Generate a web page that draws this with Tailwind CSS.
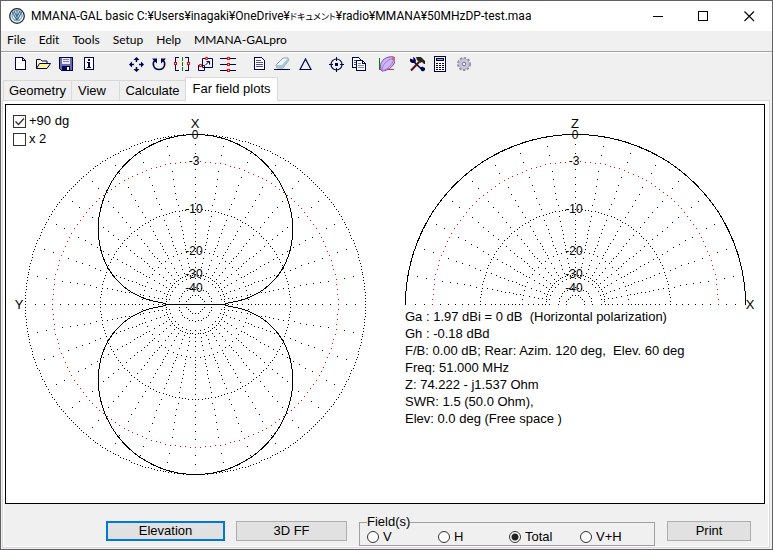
<!DOCTYPE html>
<html lang="en">
<head>
  <meta charset="UTF-8">
  <meta name="viewport" content="width=device-width, initial-scale=1.0">
  <title>MMANA-GAL basic</title>
  <script src="https://cdn.jsdelivr.net/npm/@tailwindcss/browser@4"></script>
</head>
<body class="h-screen flex flex-col overflow-hidden border border-[#626062] bg-[#f0f0f0] text-black text-[13px] font-['Liberation_Sans',Arial,sans-serif]">

<!-- Title bar -->
<header class="flex h-[30px] shrink-0 items-center bg-white font-['Roboto','Noto_Sans_CJK_JP',sans-serif] text-[12px]">
  <svg class="ml-2 h-4 w-4 shrink-0" viewBox="0 0 16 16" fill="none">
    <circle cx="8" cy="8" r="7.3" fill="#e3f1f8" stroke="#1c2430" stroke-width="1.2"/>
    <circle cx="8" cy="7.5" r="5" stroke="#5f8eaa" stroke-width="1"/>
    <path d="M3 3.5l5 9 5-9M5 3l3 6 3-6M8 3v10" stroke="#3f6d8c" stroke-width="1.1"/>
    <path d="M5 12.5h6" stroke="#7fa8bd"/>
  </svg>
  <h1 class="ml-1.5 flex-1 whitespace-nowrap leading-4">MMANA-GAL basic C:¥Users¥inagaki¥OneDrive¥<span class="text-[9px] [font-feature-settings:'palt']">ドキュメント</span>¥radio¥MMANA¥50MHzDP-test.maa</h1>
  <div class="flex">
    <button type="button" aria-label="Minimize" class="flex h-[28px] w-[45px] items-center justify-center"><svg class="h-[11px] w-[11px]" viewBox="0 0 11 11" shape-rendering="crispEdges"><path d="M0 5.5h10" stroke="#000"/></svg></button>
    <button type="button" aria-label="Maximize" class="flex h-[28px] w-[45px] items-center justify-center"><svg class="h-[11px] w-[11px]" viewBox="0 0 11 11" shape-rendering="crispEdges"><path d="M.5.5h9v9h-9z" stroke="#000" fill="none"/></svg></button>
    <button type="button" aria-label="Close" class="flex h-[28px] w-[46px] items-center justify-center"><svg class="h-[11px] w-[11px]" viewBox="0 0 11 11"><path d="M.5.5l9.500 9.500M10 .5L.5 10" stroke="#000" stroke-width="1.1"/></svg></button>
  </div>
</header>

<!-- Menu bar -->
<nav class="flex h-[21px] shrink-0 items-center gap-[13px] border-b border-[#a0a0a0] px-1.5 pb-0.5 font-['Lato',sans-serif] text-[12px] leading-4">
  <a href="#">File</a>
  <a href="#">Edit</a>
  <a href="#">Tools</a>
  <a href="#">Setup</a>
  <a href="#">Help</a>
  <a href="#">MMANA-GALpro</a>
</nav>

<!-- Tool bar -->
<div class="flex h-[25px] shrink-0 items-center border-t border-white pb-0.5 pl-[7px]">
  <div class="flex">
    <button type="button" aria-label="New" class="flex w-[23px] justify-center"><svg class="h-4 w-4" viewBox="0 0 16 16" shape-rendering="crispEdges"><path d="M3.500 1.500h7l3 3v9h-10z" fill="#fff" stroke="#000052"/><path d="M10.500 1.500v3h3" fill="none" stroke="#000052"/></svg></button>
    <button type="button" aria-label="Open" class="flex w-[23px] justify-center"><svg class="h-4 w-4" viewBox="0 0 16 16"><path d="M1.500 12.500V3.500h4l1.500 1.500h5v3" fill="#fdf9c0" stroke="#000052"/><path d="M1.500 12.500l3-5h11l-3.500 5z" fill="#fdf6a0" stroke="#000052"/></svg></button>
    <button type="button" aria-label="Save" class="flex w-[23px] justify-center"><svg class="h-4 w-4" viewBox="0 0 16 16" shape-rendering="crispEdges"><path d="M1.500 1.500h13v13h-11l-2-2z" fill="#6b6baa" stroke="#000052"/><path d="M4 2h8v6H4z" fill="#e8e8f8"/><path d="M5 3.500h6M5 5.500h6" stroke="#8080b0"/><path d="M4 10h8v5H4z" fill="#000052"/><path d="M9 11h2v3H9z" fill="#fff"/></svg></button>
    <button type="button" aria-label="Info" class="flex w-[23px] justify-center"><svg class="h-4 w-4" viewBox="0 0 16 16" shape-rendering="crispEdges"><path d="M3.500 1.500h9v12h-9z" fill="#fff" stroke="#000052"/><path d="M7 3h2v2H7zM6 6h3v5h1v1H6v-1h1V7H6z" fill="#000052"/></svg></button>
  </div>
  <div class="ml-6 flex">
    <button type="button" aria-label="Move" class="flex w-[23px] justify-center"><svg class="h-4 w-4" viewBox="0 0 16 16"><path d="M8.500 3v3M8.500 11v3M3 8.500h3M11 8.500h3" stroke="#000052" stroke-width="1.500"/><path d="M8.500 1l3 3h-6zM8.500 16l3-3h-6zM1 8.500l3-3v6zM16 8.500l-3-3v6z" fill="#000052"/></svg></button>
    <button type="button" aria-label="Rotate" class="flex w-[23px] justify-center"><svg class="h-4 w-4" viewBox="0 0 16 16"><path d="M4 4C1 7 2 13.500 8 13.500S15 7 12 4" fill="none" stroke="#000052" stroke-width="1.600"/><path d="M1 2.500h5v5zM15 2.500h-5v5z" fill="#000052"/></svg></button>
    <button type="button" aria-label="Mirror" class="flex w-[23px] justify-center"><svg class="h-4 w-4" viewBox="0 0 16 16" shape-rendering="crispEdges"><path d="M5 1.500H1.500v13H5M11 1.500h3.500v13H11" fill="none" stroke="#000052"/><path d="M8 1v14" stroke="#008000" stroke-dasharray="4 1"/><path d="M.5 6.500h2v2h-2zM13.500 6.500h2v2h-2z" fill="#fff" stroke="#f00"/></svg></button>
    <button type="button" aria-label="Scale" class="flex w-[23px] justify-center"><svg class="h-4 w-4" viewBox="0 0 16 16"><path d="M5.500 2.500h10v9h-10zM1.500 9.500h6v5h-6z" fill="none" stroke="#000052"/><path d="M8.500 9l4-4M9.500 5.500h3V8.500" fill="none" stroke="#000052"/><path d="M8.500 1.500h2v2h-2zM2.500 8.500h2v2h-2z" fill="#fff" stroke="#f00"/></svg></button>
    <button type="button" aria-label="Align" class="flex w-[23px] justify-center"><svg class="h-4 w-4" viewBox="0 0 16 16" shape-rendering="crispEdges"><path d="M0 2.500h16M0 8.500h16M0 14.500h16" stroke="#000052"/><path d="M7.500 1.500h2v2h-2zM7.500 7.500h2v2h-2zM7.500 13.500h2v2h-2z" fill="#fff" stroke="#f00"/></svg></button>
  </div>
  <div class="ml-2 flex">
    <button type="button" aria-label="Text" class="flex w-[23px] justify-center"><svg class="h-4 w-4" viewBox="0 0 16 16" shape-rendering="crispEdges"><path d="M3.500 1.500h7l3 3v9h-10z" fill="#fff" stroke="#000052"/><path d="M5 4.500h5M5 6.500h7M5 8.500h7M5 10.500h7" stroke="#50508c"/></svg></button>
    <button type="button" aria-label="Erase" class="flex w-[23px] justify-center"><svg class="h-4 w-4" viewBox="0 0 16 16"><path d="M0 13.500h16" stroke="#000052"/><path d="M2 9l7-7h5l1 2-6 8H3z" fill="#eef6f8" stroke="#6c8fa0" stroke-width=".8"/><path d="M2 9h6l1 3H3zM8 9l6-7 1 2-6 8z" fill="#a9c6d2"/></svg></button>
    <button type="button" aria-label="Triangle" class="flex w-[23px] justify-center"><svg class="h-4 w-4" viewBox="0 0 16 16"><path d="M8.500 3L14 13.500H3z" fill="none" stroke="#000052" stroke-width="1.200"/></svg></button>
  </div>
  <div class="ml-2 flex">
    <button type="button" aria-label="Center" class="flex w-[23px] justify-center"><svg class="h-4 w-4" viewBox="0 0 16 16"><circle cx="8.500" cy="8.500" r="5.500" fill="none" stroke="#000052" stroke-width="1.200"/><path d="M8.500 1v4M8.500 12v4M1 8.500h4M12 8.500h4" stroke="#000052"/><path d="M7 7h3v3H7z" fill="#000052"/></svg></button>
    <button type="button" aria-label="Copy" class="flex w-[23px] justify-center"><svg class="h-4 w-4" viewBox="0 0 16 16" shape-rendering="crispEdges"><path d="M1.500 1.500h6l2 2v8h-8z" fill="#fff" stroke="#000052"/><path d="M3 4.500h4M3 6.500h3M3 8.500h3" stroke="#50508c"/><path d="M5.500 4.500h6l3 3v7h-9z" fill="#fff" stroke="#000052"/><path d="M11.500 4.500v3h3" fill="none" stroke="#000052"/><path d="M7 7.500h3M7 9.500h6M7 11.500h6" stroke="#8080b0"/></svg></button>
  </div>
  <div class="ml-[5px] flex">
    <button type="button" aria-label="3D pattern" class="flex w-[23px] justify-center"><svg class="h-4 w-4" viewBox="0 0 16 16"><path d="M.5 2v11" stroke="#008000"/><path d="M0 13.500h15" stroke="#e03030"/><path d="M3 15C-1 10 3 2 10 1c3-.5 6-.5 6 2 1 5-6 12-13 12z" fill="#cdb6f2" stroke="#7a4ab8"/><path d="M3 15C3 9 7 4 15 2M3 15c6-2 10-6 12-12" fill="none" stroke="#9f78d8"/><path d="M13 1h3v3h-3z" fill="#e86060"/></svg></button>
  </div>
  <div class="ml-[7px] flex">
    <button type="button" aria-label="Tools" class="flex w-[23px] justify-center"><svg class="h-4 w-4" viewBox="0 0 16 16"><path d="M3 4l11 10.500" stroke="#000052" stroke-width="1.600"/><path d="M10 6l-8 8.500" stroke="#521010" stroke-width="2"/><path d="M1 2.500v3l2 1.500h3l1-2-1-3-2-1 .5 3zM11.500 12l1.500-1.500 3 1.500v2l-2 1.500-2-1z" fill="#000052"/><path d="M7 1h5l4 4v3h-1l-2-2-2 1-3-3z" fill="#28281a"/></svg></button>
    <button type="button" aria-label="Calculator" class="flex w-[24px] justify-center"><svg class="h-4 w-4" viewBox="0 0 16 16" shape-rendering="crispEdges"><path d="M2.500.5h11v15h-11z" fill="#fff" stroke="#000052"/><path d="M4 2h8v3H4z" fill="#000052"/><path d="M5 3h6v1H5z" fill="#8ab"/><path d="M4 7h2v1H4zM7 7h2v1H7zM10 7h2v1h-2zM4 9h2v1H4zM7 9h2v1H7zM10 9h2v1h-2zM4 11h2v1H4zM7 11h2v1H7zM10 11h2v1h-2zM4 13h2v1H4zM7 13h2v1H7zM10 13h2v1h-2z" fill="#000052"/></svg></button>
    <button type="button" aria-label="Options" class="flex w-[23px] justify-center"><svg class="h-4 w-4" viewBox="0 0 16 16"><circle cx="8" cy="8" r="6" fill="none" stroke="#8c8ca8" stroke-width="2" stroke-dasharray="2.400 1.500"/><circle cx="8" cy="8" r="5.300" fill="#c8c8d8" stroke="#a2a2bc" stroke-width=".7"/><circle cx="8" cy="8" r="1.800" fill="#f0f0f0" stroke="#77778e"/></svg></button>
  </div>
</div>

<!-- Tabs -->
<div role="tablist" class="relative z-10 -mb-px flex h-[24px] shrink-0 items-end pl-0.5 leading-4">
  <button type="button" role="tab" class="h-[21px] w-[69px] border border-[#d9d9d9]">Geometry</button>
  <button type="button" role="tab" class="-ml-px h-[21px] w-[49px] border border-[#d9d9d9] pl-[6px] text-left">View</button>
  <button type="button" role="tab" class="-ml-px h-[21px] w-[67px] border border-[#d9d9d9]">Calculate</button>
  <button type="button" role="tab" aria-selected="true" class="-ml-px h-[24px] w-[93px] border border-b-0 border-[#d9d9d9] bg-white pb-0.5">Far field plots</button>
</div>

<main class="mr-0.5 mb-px ml-px flex min-h-0 flex-1 flex-col border border-[#d9d9d9] bg-white px-px pt-[3px] pb-px">
  <!-- Plots -->
  <section class="relative mr-[3px] ml-px flex min-h-0 flex-1 border border-black">
    <svg id="azimuth" class="h-[398px] w-[380px] shrink-0" viewBox="0 0 380 398" shape-rendering="crispEdges"></svg>
    <div class="flex-1">
      <svg id="elevation" class="h-[203px] w-[378px]" viewBox="0 0 378 203" shape-rendering="crispEdges" overflow="visible"></svg>
      <div class="ml-[19px] whitespace-pre leading-[17px]"><p>Ga : 1.97 dBi = 0 dB  (Horizontal polarization)</p><p>Gh : -0.18 dBd</p><p>F/B: 0.00 dB; Rear: Azim. 120 deg,  Elev. 60 deg</p><p>Freq: 51.000 MHz</p><p>Z: 74.222 - j1.537 Ohm</p><p>SWR: 1.5 (50.0 Ohm),</p><p>Elev: 0.0 deg (Free space )</p></div>
    </div>
    <div class="absolute top-[7px] left-[7px] leading-[18px]">
      <label class="relative flex items-center gap-[3px]"><input type="checkbox" checked class="peer h-[13px] w-[13px] appearance-none border border-[#333] bg-white"><svg class="absolute left-px hidden h-[11px] w-[11px] peer-checked:block" viewBox="0 0 11 11"><path d="M1.500 5.500l3 3 5.500-6" fill="none" stroke="#333" stroke-width="1.300"/></svg>+90 dg</label>
      <label class="flex items-center gap-[3px]"><input type="checkbox" class="h-[13px] w-[13px] appearance-none border border-[#333] bg-white">x 2</label>
    </div>
  </section>

  <!-- Bottom controls -->
  <footer class="flex h-[42px] shrink-0 items-start bg-[#f0f0f0] pl-[102px]">
    <button type="button" class="mt-[17px] h-5 w-[119px] border-2 border-[#0078d7] bg-[#e1e1e1] leading-4">Elevation</button>
    <button type="button" class="mt-[17px] ml-[11px] h-5 w-[111px] border border-[#adadad] bg-[#e1e1e1] leading-[18px]">3D FF</button>
    <fieldset class="mt-[10px] ml-[12px] h-[32px] w-[296px] border border-[#a0a0a0] pl-[7px]">
      <legend class="leading-4">Field(s)</legend>
      <div class="grid w-[284px] grid-cols-4 leading-[14px]">
        <label class="flex items-center gap-1"><input type="radio" name="field" class="h-3 w-3 appearance-none rounded-full border border-[#333] bg-white">V</label>
        <label class="flex items-center gap-1"><input type="radio" name="field" class="h-3 w-3 appearance-none rounded-full border border-[#333] bg-white">H</label>
        <label class="flex items-center gap-1"><input type="radio" name="field" checked class="h-3 w-3 appearance-none rounded-full border border-[#333] bg-white checked:bg-[radial-gradient(#222_3px,#fff_4px)]">Total</label>
        <label class="flex items-center gap-1"><input type="radio" name="field" class="h-3 w-3 appearance-none rounded-full border border-[#333] bg-white">V+H</label>
      </div>
    </fieldset>
    <button type="button" class="mt-[17px] ml-[12px] h-5 w-[84px] border border-[#adadad] bg-[#e1e1e1] leading-[18px]">Print</button>
  </footer>
</main>

<script>
  const R = 170;
  const CX = 189;
  const CY = 199;

  // Radius for a level in dB on the log periodic scale
  const radius = (db) => R * Math.pow(0.89, -db / 2);

  const dot = (r, deg) => {
    const a = deg * Math.PI / 180;
    return `M${Math.round(CX + r * Math.cos(a))} ${Math.round(CY - r * Math.sin(a))}h1v1h-1z`;
  };

  const ring = (db, step, color, end) => {
    let d = '';
    for (let a = 0; a <= end; a += step) d += dot(radius(db), a);
    return `<path d="${d}" fill="${color}"/>`;
  };

  const grid = (end) => {
    let out = ring(0, 1, '#000', end) + ring(-3, 2, '#f00', end) + ring(-10, 2, '#000', end) +
      ring(-20, 5, '#000', end) + ring(-30, 5, '#000', end) + ring(-40, 10, '#000', end) + ring(-50, 18, '#000', end);
    let d = '';
    for (let a = 0; a <= end; a += 10) {
      for (let db = -1; db > -20; db--) if (db !== -3) d += dot(radius(db), a);
      for (let db = -20; db >= -32; db -= 2) d += dot(radius(db), a);
    }
    return out + `<path d="${d}" fill="#000"/>`;
  };

  const curve = (gain, end) => {
    const pts = [];
    for (let a = 0; a <= end; a++) {
      const r = radius(gain(a)), t = a * Math.PI / 180;
      pts.push(`${(CX + 0.5 + r * Math.cos(t)).toFixed(1)},${(CY + 0.5 - r * Math.sin(t)).toFixed(1)}`);
    }
    return `<polyline points="${pts.join(' ')}" fill="none" stroke="#000"/>`;
  };

  const text = (x, y, s, size) => `<text x="${x}" y="${y}" text-anchor="middle" font-size="${size}">${s}</text>`;
  const scale = (axis) => text(CX, 23, axis, 13) + text(CX, 34, '0', 12) + text(CX - 1, 60, '-3', 12) +
    text(CX - 1, 108, '-10', 12) + text(CX - 1, 150, '-20', 12) + text(CX - 1, 173, '-30', 12) + text(CX - 1, 187, '-40', 12);

  // Half wave dipole lying along the Y axis
  const dipole = (deg) => {
    if (deg % 180 === 0) return -30;
    const t = deg * Math.PI / 180;
    const e = Math.abs(Math.cos(Math.PI / 2 * Math.cos(t)) / Math.sin(t));
    return Math.max(-30, 20 * Math.log10(e));
  };

  document.getElementById('azimuth').innerHTML = grid(359) + curve(dipole, 360) +
    `<path d="M${CX - 30} ${CY + 0.5}h61" stroke="#000"/>` + scale('X') + text(13, 204, 'Y', 13);
  document.getElementById('elevation').innerHTML = grid(180) + curve(() => 0, 180) + scale('Z') + text(364, 204, 'X', 13);
</script>

</body>
</html>
